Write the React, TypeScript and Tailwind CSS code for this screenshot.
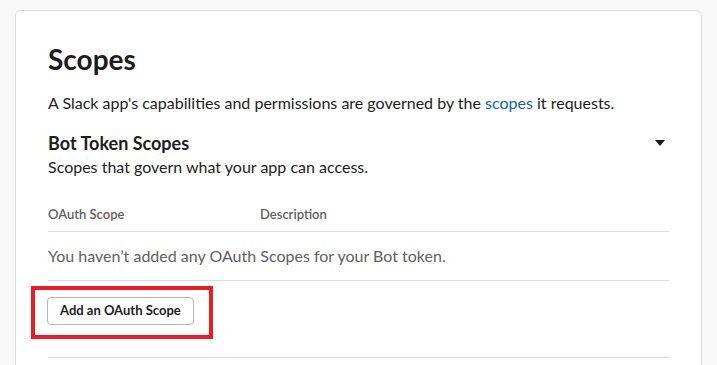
import { ReactNode } from 'react';

function ScopeTableHeader() {
  return (
    <div className="flex border-b border-[#dddddd] pt-[29px] pb-[8px] text-[13px] font-semibold leading-[18px] text-[#616061]">
      <div className="w-[212px]">OAuth Scope</div>
      <div>Description</div>
    </div>
  );
}

function Highlight({ children }: { children: ReactNode }) {
  return (
    <div className="ml-[-17px] inline-flex border-4 border-[#ec1c24] pt-[7px] pb-[10px] pl-[12px] pr-[15px]">
      {children}
    </div>
  );
}

export default function App() {
  return (
    <div className="min-h-screen bg-[#f8f8f8] px-[15px] pt-[10px] font-['Lato',sans-serif] text-[#1d1c1d]">
      <div className="h-[400px] rounded-[6px] border border-[#dddddd] bg-white px-[32px] pt-[32px]">
        <h1 className="text-[28px] font-bold leading-[32px]">Scopes</h1>
        <p className="mt-[19px] text-[16px] leading-[18px]">
          A Slack app's capabilities and permissions are governed by the{' '}
          <a className="text-[#1264a3]">scopes</a> it requests.
        </p>

        <div className="mt-[20px] flex items-start justify-between">
          <div>
            <h2 className="text-[18px] font-bold leading-[22px]">Bot Token Scopes</h2>
            <p className="mt-[4px] text-[16px] leading-[18px]">
              Scopes that govern what your app can access.
            </p>
          </div>
          <svg className="mr-[4px] mt-[8px]" width="10" height="6" viewBox="0 0 10 6">
            <path d="M0 0h10L5 6z" fill="#1d1c1d" />
          </svg>
        </div>

        <ScopeTableHeader />

        <div className="border-b border-[#dddddd] py-[15px] text-[16px] leading-[18px] text-[#616061]">
          You haven’t added any OAuth Scopes for your Bot token.
        </div>

        <div className="border-b border-[#dddddd] pt-[5px] pb-[18px]">
          <Highlight>
            <button className="h-[28px] rounded-[4px] border border-[#b5b5b5] bg-white px-[12px] text-[13px] font-bold text-[#1d1c1d]">
              Add an OAuth Scope
            </button>
          </Highlight>
        </div>
      </div>
    </div>
  );
}
